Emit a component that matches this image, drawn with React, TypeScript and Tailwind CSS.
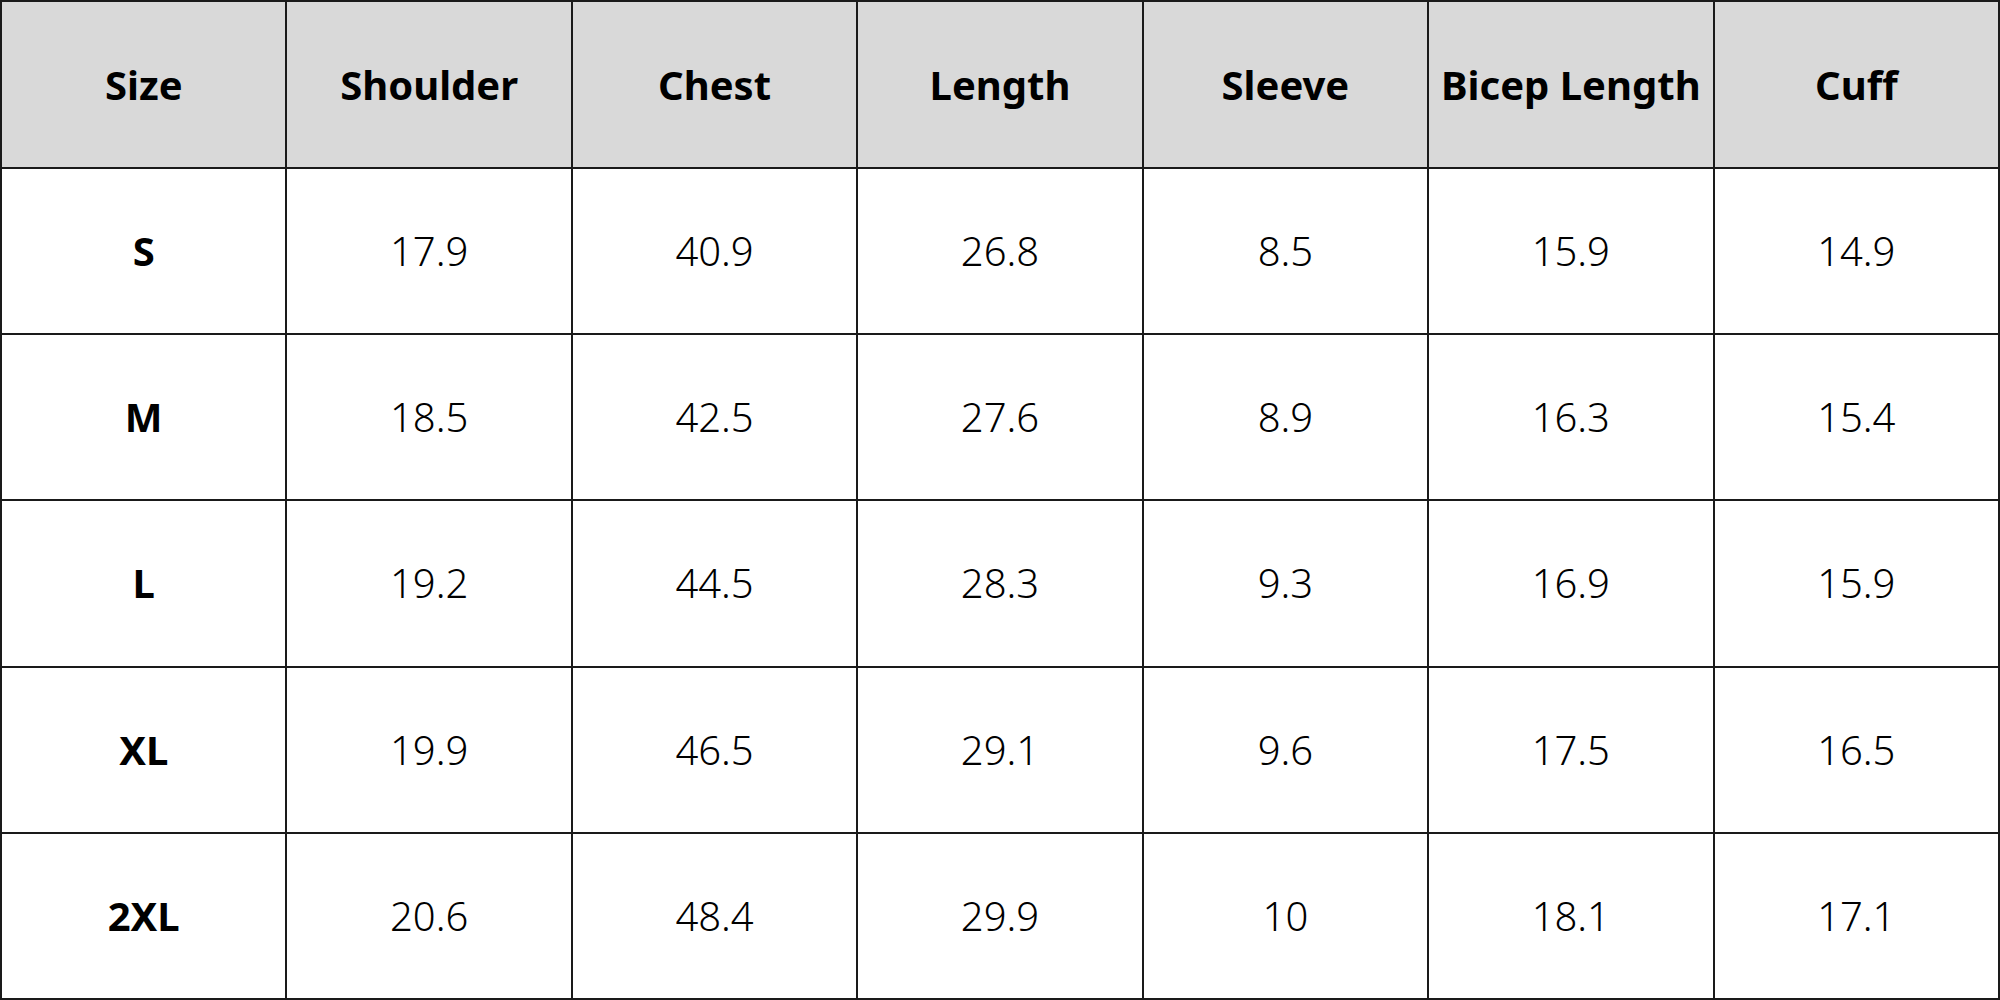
import React from 'react';

const headers = ['Size', 'Shoulder', 'Chest', 'Length', 'Sleeve', 'Bicep Length', 'Cuff'];

const rows: [string, string, string, string, string, string, string][] = [
    ['S', '17.9', '40.9', '26.8', '8.5', '15.9', '14.9'],
    ['M', '18.5', '42.5', '27.6', '8.9', '16.3', '15.4'],
    ['L', '19.2', '44.5', '28.3', '9.3', '16.9', '15.9'],
    ['XL', '19.9', '46.5', '29.1', '9.6', '17.5', '16.5'],
    ['2XL', '20.6', '48.4', '29.9', '10', '18.1', '17.1'],
];

const App: React.FC = () => {
    return (
        <div className="w-[2000px] h-[1000px] bg-white overflow-hidden" style={{ fontFamily: '"Noto Sans", "Open Sans", sans-serif' }}>
            <table className="w-full h-full table-fixed border-collapse text-black">
                <thead>
                    <tr className="h-[167px] bg-[#d9d9d9]">
                        {headers.map(h => (
                            <th key={h} className="border-2 border-[#1a1a1a] text-[40px] font-bold text-center align-middle">
                                {h}
                            </th>
                        ))}
                    </tr>
                </thead>
                <tbody>
                    {rows.map(r => (
                        <tr key={r[0]} className="h-[166px]">
                            {r.map((v, i) => (
                                <td
                                    key={i}
                                    className={`border-2 border-[#1a1a1a] text-center align-middle text-[40px] ${i === 0 ? 'font-bold' : 'font-light'}`}
                                >
                                    {v}
                                </td>
                            ))}
                        </tr>
                    ))}
                </tbody>
            </table>
        </div>
    );
};

export default App;
